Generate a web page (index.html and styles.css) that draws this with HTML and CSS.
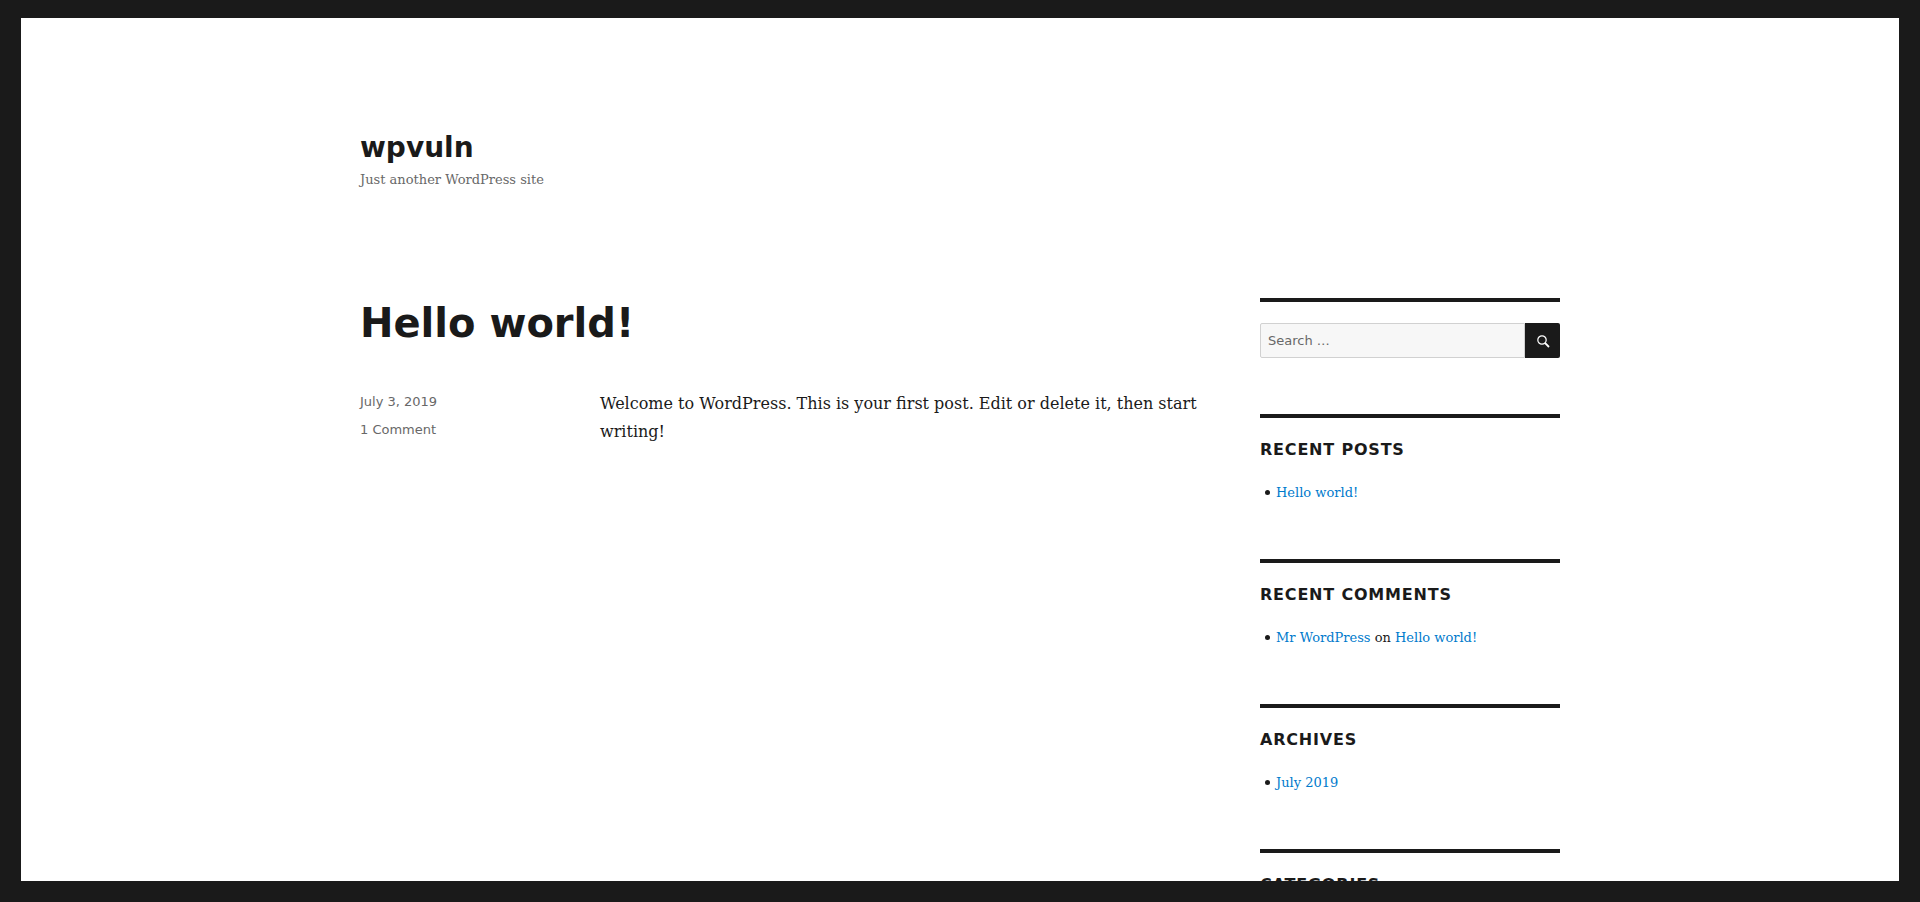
FILE: index.html
```
<!DOCTYPE html>
<html lang="en">
<head>
<meta charset="utf-8">
<meta name="viewport" content="width=device-width, initial-scale=1">
<title>wpvuln</title>
<link rel="stylesheet" href="styles.css">
</head>
<body>
<div class="site">
  <div class="site-inner">
    <header class="site-header">
      <h1 class="site-title"><a href="#">wpvuln</a></h1>
      <p class="site-description">Just another WordPress site</p>
    </header>
    <div class="site-content">
      <main class="content-area">
        <article>
          <h2 class="entry-title"><a href="#">Hello world!</a></h2>
          <div class="entry-body">
            <footer class="entry-meta">
              <a href="#"><time datetime="2019-07-03">July 3, 2019</time></a>
              <a href="#">1 Comment</a>
            </footer>
            <div class="entry-content">
              <p>Welcome to WordPress. This is your first post. Edit or delete it, then start writing!</p>
            </div>
          </div>
        </article>
      </main>
      <aside class="sidebar">
        <section class="widget">
          <form class="search-form" role="search">
            <input class="search-field" type="search" placeholder="Search …" aria-label="Search for:">
            <button class="search-submit" type="submit" aria-label="Search">
              <svg class="search-icon" viewBox="0 0 16 16" aria-hidden="true"><circle cx="7" cy="7" r="4.2"/><path d="M10 10 14 14"/></svg>
            </button>
          </form>
        </section>
        <section class="widget">
          <h2 class="widget-title">Recent Posts</h2>
          <ul><li><a href="#">Hello world!</a></li></ul>
        </section>
        <section class="widget">
          <h2 class="widget-title">Recent Comments</h2>
          <ul><li><a href="#">Mr WordPress</a> on <a href="#">Hello world!</a></li></ul>
        </section>
        <section class="widget">
          <h2 class="widget-title">Archives</h2>
          <ul><li><a href="#">July 2019</a></li></ul>
        </section>
        <section class="widget">
          <h2 class="widget-title">Categories</h2>
        </section>
      </aside>
    </div>
  </div>
</div>
</body>
</html>
```
FILE: styles.css
```
*, *::before, *::after {
  box-sizing: border-box;
}

body {
  display: flex;
  height: 100vh;
  margin: 0;
  padding: 18px 21px 21px;
  background: #1a1a1a;
  color: #1a1a1a;
  font: 16px/28px "DejaVu Serif", Georgia, serif;
}

h1, h2, p, ul {
  margin: 0;
}

/* The white sheet scrolls inside the dark frame */
.site {
  flex: 1;
  overflow-y: auto;
  scrollbar-width: none;
  background: #fff;
}

.site-inner {
  max-width: 1320px;
  margin: 0 auto;
  padding: 0 60px;
}

.site-header {
  padding: 112px 0 111px;
}

.site-title,
.entry-title,
.widget-title,
.entry-meta,
.search-field {
  font-family: "DejaVu Sans", Verdana, sans-serif;
}

.site-title {
  font-size: 28px;
  line-height: 35px;
}

.site-title a,
.entry-title a {
  color: #1a1a1a;
}

.site-description {
  margin-top: 8px;
  color: #686868;
  font-size: 13px;
  line-height: 14px;
}

a {
  color: #007acc;
  text-decoration: none;
}

.site-content {
  display: flex;
  justify-content: space-between;
}

.content-area {
  width: 70%;
}

.entry-title {
  margin-bottom: 41px;
  font-size: 40px;
  line-height: 51px;
}

.entry-body {
  display: grid;
  grid-template-columns: 2fr 5fr;
}

.entry-meta {
  display: flex;
  flex-direction: column;
  align-items: flex-start;
  gap: 7px;
  padding-top: 1px;
  font-size: 13px;
  line-height: 21px;
}

.entry-meta a {
  color: #686868;
}

.sidebar {
  width: 25%;
  font-size: 13px;
  line-height: 21px;
}

.widget {
  margin-bottom: 56px;
  padding-top: 21px;
  border-top: 4px solid #1a1a1a;
}

.widget-title {
  margin-bottom: 22px;
  font-size: 16px;
  line-height: 21px;
  letter-spacing: 0.05em;
  text-transform: uppercase;
}

.widget ul {
  padding-left: 16px;
  list-style: none;
}

/* Round bullets set close to the text */
.widget li::before {
  content: "";
  display: inline-block;
  width: 5px;
  height: 5px;
  margin: 0 6px 2px -11px;
  border-radius: 50%;
  background: #1a1a1a;
}

.search-form {
  display: flex;
}

.search-field {
  flex: 1;
  min-width: 0;
  height: 35px;
  margin: 0;
  padding: 0 7px;
  border: 1px solid #d1d1d1;
  border-radius: 2px 0 0 2px;
  background: #f7f7f7;
  color: #686868;
  font-size: 13px;
  appearance: none;
}

.search-field::placeholder {
  color: #686868;
}

.search-submit {
  display: grid;
  place-items: center;
  width: 35px;
  height: 35px;
  padding: 0;
  border: 0;
  border-radius: 0 2px 2px 0;
  background: #1a1a1a;
  color: #fff;
}

.search-icon {
  width: 16px;
  height: 16px;
  fill: none;
  stroke: currentColor;
  stroke-width: 1.2;
}

.search-icon path {
  stroke-width: 1.8;
}
```
